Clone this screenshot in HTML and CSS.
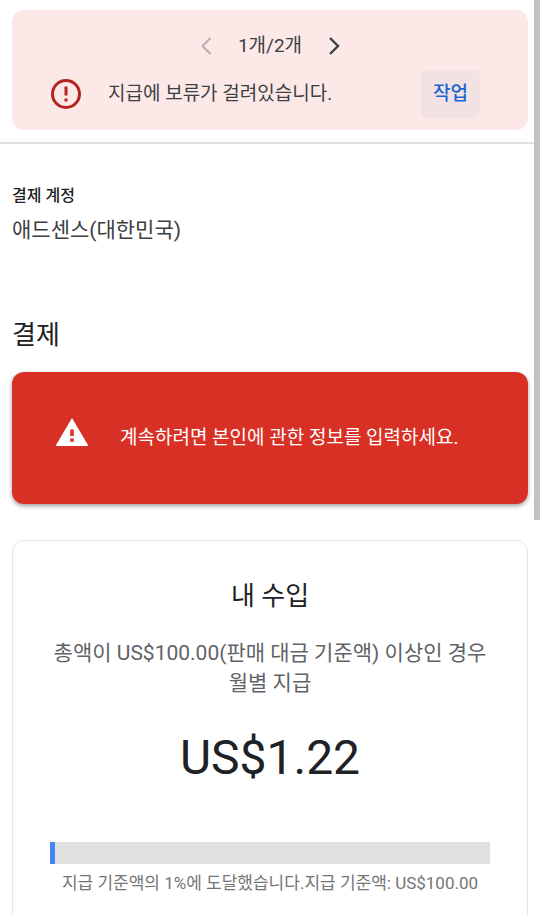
FILE: index.html
```
<!DOCTYPE html>
<html lang="ko">
<head>
<meta charset="utf-8">
<meta name="viewport" content="width=device-width, initial-scale=1">
<title>결제</title>
<link rel="stylesheet" href="styles.css">
</head>
<body>
<header class="notices">
  <section class="notice" aria-label="알림">
    <nav class="pager">
      <button class="pager-button" type="button" aria-label="이전" disabled>
        <svg width="24" height="24" viewBox="0 0 24 24" fill="none" stroke="currentColor" stroke-width="2"><path d="M16.500 4 8.500 12l8 8"/></svg>
      </button>
      <span>1개/2개</span>
      <button class="pager-button" type="button" aria-label="다음">
        <svg width="24" height="24" viewBox="0 0 24 24" fill="none" stroke="currentColor" stroke-width="2.400"><path d="M8 4 16 12 8 20"/></svg>
      </button>
    </nav>
    <div class="notice-row">
      <svg class="notice-icon" width="32" height="32" viewBox="0 0 32 32"><circle cx="16" cy="16" r="13.500" fill="none" stroke="currentColor" stroke-width="3"/><path d="M14.500 8.500h3v9h-3zM14.500 20.500h3v3h-3z" fill="currentColor"/></svg>
      <p class="notice-text">지급에 보류가 걸려있습니다.</p>
      <button class="action" type="button">작업</button>
    </div>
  </section>
</header>
<main class="content">
  <section class="account">
    <h2 class="account-label">결제 계정</h2>
    <p class="account-name">애드센스(대한민국)</p>
  </section>
  <h1 class="title">결제</h1>
  <section class="alert" role="alert">
    <svg class="alert-icon" width="34" height="28" viewBox="0 0 34 28"><path fill="currentColor" fill-rule="evenodd" d="M17 0 33.500 28H.5zM15.200 11.500v6.500h3.600v-6.500zM15.200 20.500v3.300h3.600v-3.300z"/></svg>
    <p>계속하려면 본인에 관한 정보를 입력하세요.</p>
  </section>
  <section class="card">
    <h2 class="card-title">내 수입</h2>
    <p class="card-text">총액이 US$100.00(판매 대금 기준액) 이상인 경우 월별 지급</p>
    <p class="amount">US$1.22</p>
    <div class="progress" role="progressbar" aria-label="지급 기준액" aria-valuenow="1" aria-valuemin="0" aria-valuemax="100"><div class="progress-fill" style="width: 1.22%"></div></div>
    <p class="progress-text">지급 기준액의 1%에 도달했습니다.지급 기준액: US$100.00</p>
  </section>
</main>
<div class="scroll-thumb"></div>
</body>
</html>
```
FILE: styles.css
```
* { box-sizing: border-box; }
html { scrollbar-width: none; }
body {
  margin: 0;
  background: #fff;
  color: #3c4043;
  font-family: Roboto, "Noto Sans CJK KR", sans-serif;
  font-size: 19px;
  line-height: 24px;
  word-break: keep-all;
}
h1, h2, p { margin: 0; font-weight: 400; }
button { margin: 0; padding: 0; border: 0; background: none; font: inherit; }
svg { display: block; flex: none; }
.notices { padding: 10px 12px 12px; border-bottom: 2px solid #e0e0e1; }
.notice { padding: 20px 0 12px; border-radius: 12px; background: #fce8e6; }
.pager { display: flex; justify-content: center; align-items: center; gap: 20px; height: 32px; }
.pager-button { color: #3c4043; }
.pager-button:disabled { color: #b9adae; }
.notice-row { display: flex; align-items: center; margin-top: 8px; padding: 0 48px 0 38px; }
.notice-icon { color: #b3261e; }
.notice-text { flex: 1; margin-left: 26px; }
.action { height: 48px; padding: 0 12px; border-radius: 6px; background: #f2e2e4; color: #1967d2; font-weight: 500; }
.content { padding: 40px 12px 0; }
.account-label { color: #202124; font-size: 16px; font-weight: 500; }
.account-name { margin-top: 8px; font-size: 21px; line-height: 28px; }
.title { margin-top: 73px; color: #202124; font-size: 26px; line-height: 36px; }
.alert { display: flex; align-items: center; gap: 31px; min-height: 132px; margin-top: 19px; padding: 0 43px; border-radius: 12px; background: #d93025; color: #fff; box-shadow: 0 2px 4px rgba(60, 64, 67, .5); }
.alert-icon { margin-bottom: 13px; }
.card { margin-top: 36px; padding: 37px; border: 1px solid #e4e5e8; border-radius: 12px; text-align: center; }
.card-title { color: #202124; font-size: 26px; line-height: 36px; }
.card-text { margin-top: 24px; color: #5f6368; font-size: 21px; line-height: 30px; }
.amount { margin-top: 28px; color: #202124; font-size: 48px; line-height: 64px; }
.progress { height: 22px; margin-top: 52px; background: #e0e0e0; }
.progress-fill { height: 100%; background: #4285f4; }
.progress-text { margin-top: 7px; color: #757575; font-size: 17px; }
.scroll-thumb { position: fixed; top: 0; right: 0; width: 6px; height: 520px; background: #c1c1c1; }
```
